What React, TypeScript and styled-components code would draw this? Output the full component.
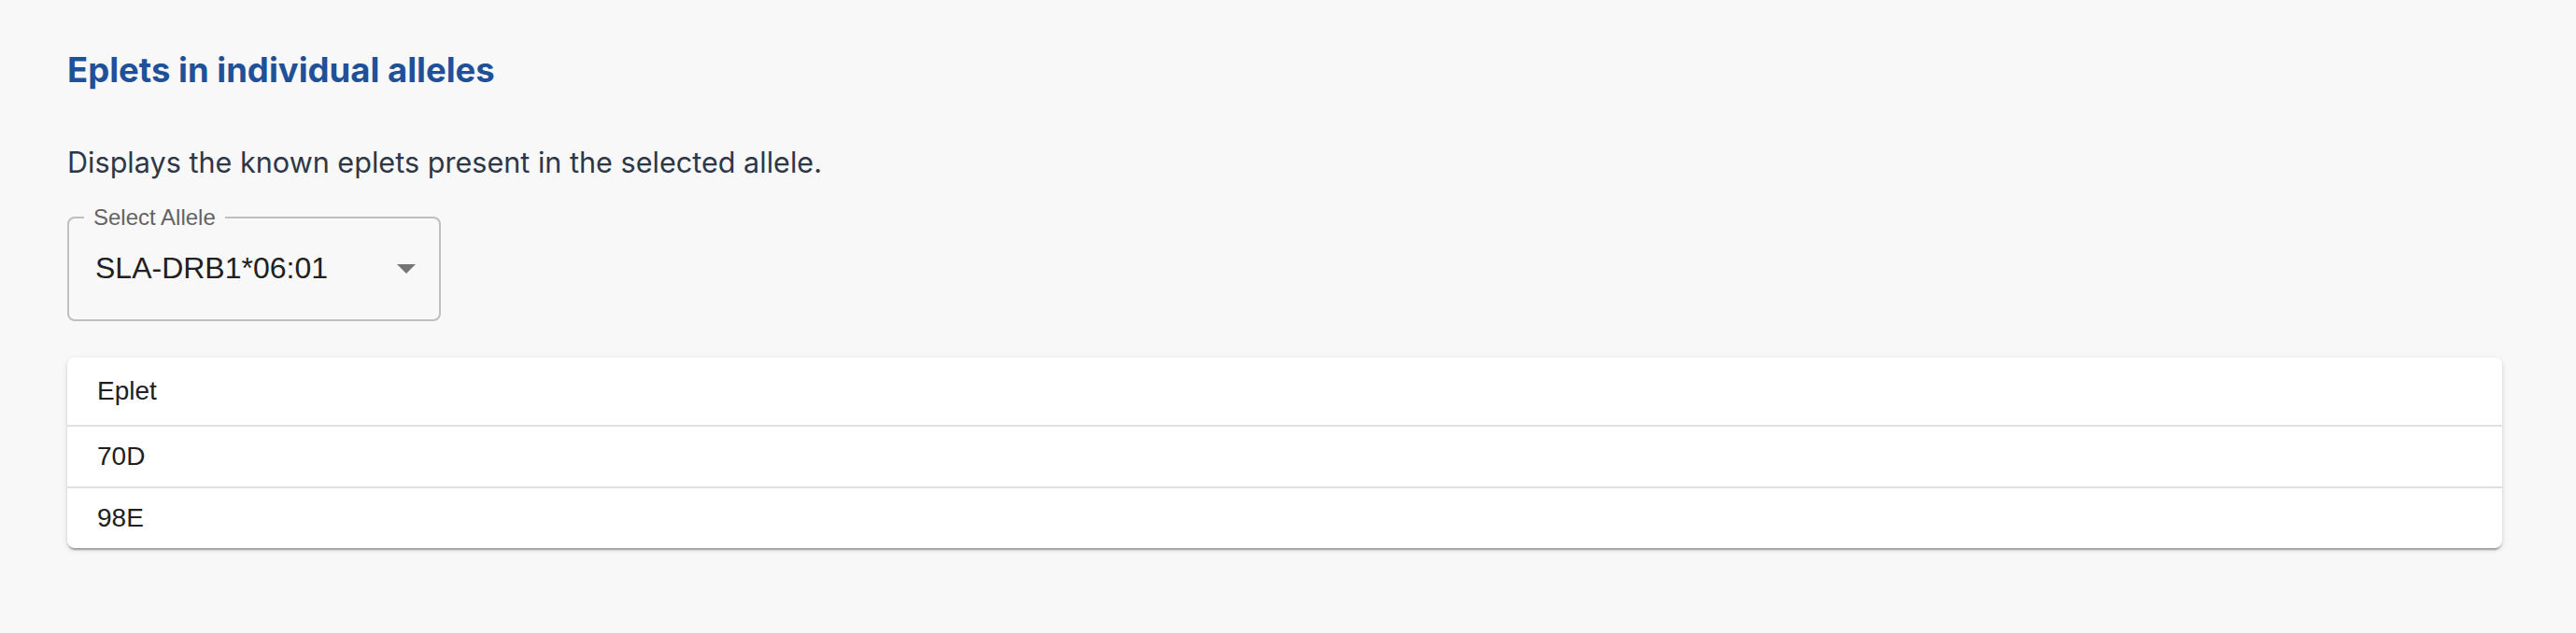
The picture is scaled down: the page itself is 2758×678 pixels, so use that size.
import React from "react";
import styled, { createGlobalStyle } from "styled-components";

const GlobalStyle = createGlobalStyle`
  html, body {
    margin: 0;
    padding: 0;
    background: #f8f8f8;
  }
  body {
    font-family: "Liberation Sans", Arial, sans-serif;
  }
`;

const Page = styled.main`
  box-sizing: border-box;
  width: 100%;
  min-height: 678px;
  padding: 54px 79px 0 72px;
  background: #f8f8f8;
  display: flex;
  flex-direction: column;
  align-items: flex-start;
`;

const Title = styled.h2`
  margin: 0;
  font-family: Inter, "Noto Sans", sans-serif;
  font-weight: 700;
  font-size: 36.5px;
  line-height: 43px;
  letter-spacing: 0;
  color: #1f5199;
`;

const Description = styled.p`
  margin: 54px 0 0;
  font-family: Inter, "Noto Sans", sans-serif;
  font-weight: 400;
  font-size: 30.6px;
  line-height: 45px;
  color: #2d3748;
`;

const SelectField = styled.fieldset`
  box-sizing: border-box;
  width: 400px;
  margin: 25px 0 0;
  padding: 0 16px;
  border: 2px solid #bfbfbf;
  border-radius: 8px;
  min-width: 0;
`;

const SelectLabel = styled.legend`
  padding: 0 10px;
  font-family: "Liberation Sans", Arial, sans-serif;
  font-size: 24px;
  line-height: 24px;
  color: #636363;
`;

const SelectRow = styled.div`
  display: flex;
  align-items: flex-start;
  justify-content: space-between;
  padding: 19px 0 31px 12px;
  margin-right: -5px;
`;

const SelectValue = styled.span`
  font-family: "Liberation Sans", Arial, sans-serif;
  font-size: 32px;
  line-height: 46px;
  color: #202020;
`;

const ArrowIcon = styled.svg`
  width: 48px;
  height: 48px;
  fill: #757575;
  flex: none;
  margin-top: -1px;
`;

const TablePaper = styled.section`
  box-sizing: border-box;
  align-self: stretch;
  margin-top: 39px;
  background: #ffffff;
  border-radius: 8px;
  overflow: hidden;
  box-shadow: 0px 4px 2px -2px rgba(0, 0, 0, 0.2),
    0px 2px 2px 0px rgba(0, 0, 0, 0.14), 0px 2px 6px 0px rgba(0, 0, 0, 0.12);
`;

const Table = styled.table`
  width: 100%;
  border-collapse: collapse;
  border-spacing: 0;
`;

const Cell = styled.td<{ $head?: boolean }>`
  padding: 12px 48px 12px 32px;
  text-align: left;
  font-family: "Liberation Sans", Arial, sans-serif;
  font-size: 28px;
  font-weight: 400;
  line-height: ${(p) => (p.$head ? "48px" : "40px")};
  color: #202020;
  border-bottom: 2px solid #e0e0e0;
`;

const Row = styled.tr`
  &:last-child td {
    border-bottom: none;
  }
`;

const eplets = ["70D", "98E"];

export default function App() {
  return (
    <>
      <GlobalStyle />
      <Page>
        <Title>Eplets in individual alleles</Title>
        <Description>
          Displays the known eplets present in the selected allele.
        </Description>
        <SelectField>
          <SelectLabel>Select Allele</SelectLabel>
          <SelectRow>
            <SelectValue>SLA-DRB1*06:01</SelectValue>
            <ArrowIcon viewBox="0 0 24 24" aria-hidden="true">
              <path d="M7 10l5 5 5-5z" />
            </ArrowIcon>
          </SelectRow>
        </SelectField>
        <TablePaper>
          <Table>
            <thead>
              <tr>
                <Cell as="th" $head>
                  Eplet
                </Cell>
              </tr>
            </thead>
            <tbody>
              {eplets.map((e) => (
                <Row key={e}>
                  <Cell>{e}</Cell>
                </Row>
              ))}
            </tbody>
          </Table>
        </TablePaper>
      </Page>
    </>
  );
}
